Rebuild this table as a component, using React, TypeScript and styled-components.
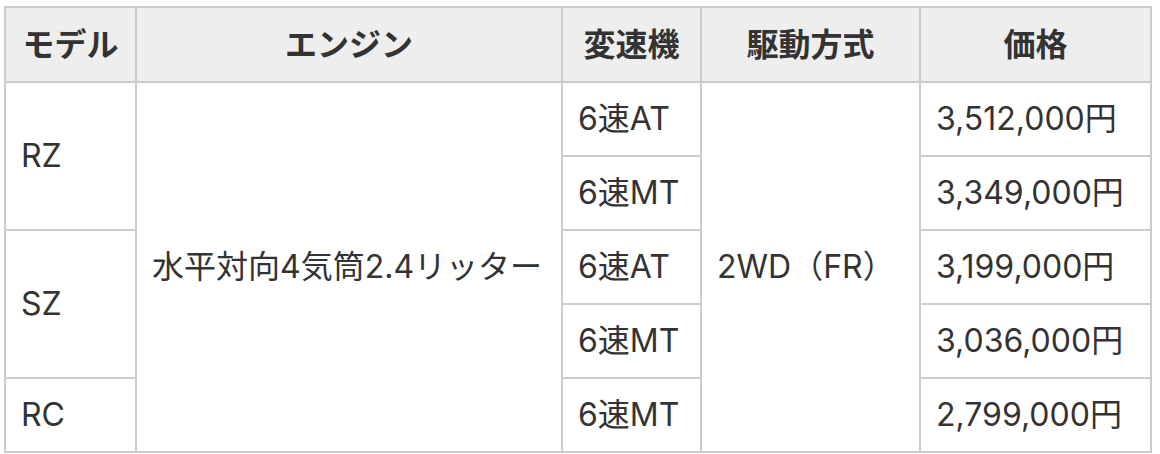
import styled, { createGlobalStyle } from 'styled-components';

const GlobalStyle = createGlobalStyle`
  html, body {
    margin: 0;
    padding: 0;
    background: #ffffff;
  }
  body {
    font-family: 'Inter', 'Noto Sans CJK JP', sans-serif;
    color: #333333;
  }
`;

const Wrapper = styled.div`
  padding: 6px 10px 0 4px;
`;

const Table = styled.table`
  width: 1146px;
  border-collapse: collapse;
  table-layout: fixed;
  font-size: 32px;
  line-height: 48px;
`;

const HeadCell = styled.th`
  background-color: #eeeeee;
  border: 2px solid #cccccc;
  font-weight: bold;
  text-align: center;
  height: 75px;
  padding: 0 12px;
  box-sizing: border-box;
  color: #333333;
`;

const Cell = styled.td`
  border: 2px solid #cccccc;
  padding: 0 15px;
  height: 74px;
  box-sizing: border-box;
  vertical-align: middle;
  white-space: nowrap;
  text-align: left;
  color: #333333;
`;

const columns = [131, 426, 139, 219, 231];

type Row = {
  model?: { name: string; span: number };
  gear: string;
  price: string;
};

const rows: Row[] = [
  { model: { name: 'RZ', span: 2 }, gear: '6速AT', price: '3,512,000円' },
  { gear: '6速MT', price: '3,349,000円' },
  { model: { name: 'SZ', span: 2 }, gear: '6速AT', price: '3,199,000円' },
  { gear: '6速MT', price: '3,036,000円' },
  { model: { name: 'RC', span: 1 }, gear: '6速MT', price: '2,799,000円' },
];

function App() {
  return (
    <Wrapper>
      <GlobalStyle />
      <Table>
        <colgroup>
          {columns.map((w, i) => (
            <col key={i} style={{ width: w }} />
          ))}
        </colgroup>
        <thead>
          <tr>
            <HeadCell>モデル</HeadCell>
            <HeadCell>エンジン</HeadCell>
            <HeadCell>変速機</HeadCell>
            <HeadCell>駆動方式</HeadCell>
            <HeadCell>価格</HeadCell>
          </tr>
        </thead>
        <tbody>
          {rows.map((row, i) => (
            <tr key={i}>
              {row.model ? (
                <Cell rowSpan={row.model.span}>{row.model.name}</Cell>
              ) : null}
              {i === 0 ? (
                <Cell rowSpan={rows.length}>水平対向4気筒2.4リッター</Cell>
              ) : null}
              <Cell>{row.gear}</Cell>
              {i === 0 ? <Cell rowSpan={rows.length}>2WD（FR）</Cell> : null}
              <Cell>{row.price}</Cell>
            </tr>
          ))}
        </tbody>
      </Table>
    </Wrapper>
  );
}
export default App;
